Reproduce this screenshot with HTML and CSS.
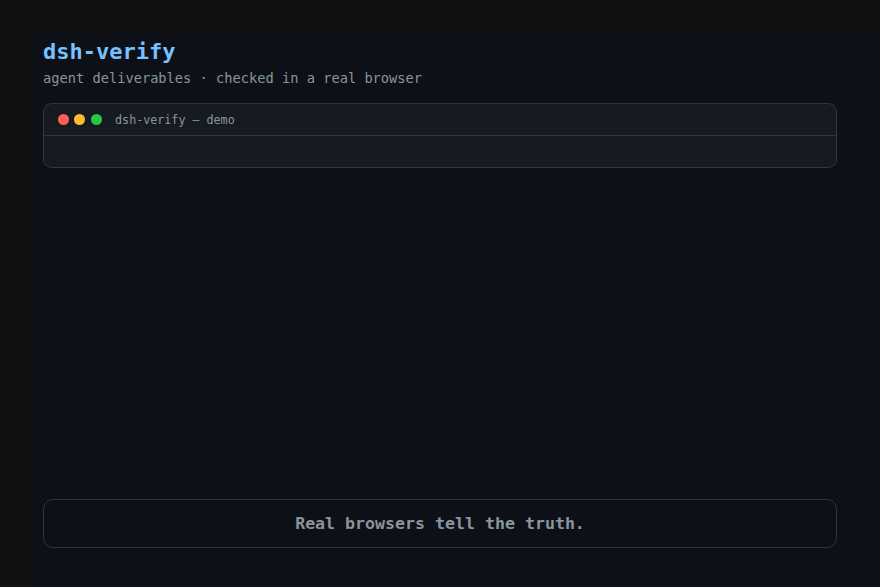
FILE: index.html
```html
<!DOCTYPE html>
<html lang="en">
<head>
<meta charset="utf-8">
<title>dsh-verify</title>
<link rel="stylesheet" href="styles.css">
</head>
<body>
<main class="panel">
  <h1 class="title">dsh-verify</h1>
  <p class="subtitle">agent deliverables · checked in a real browser</p>
  <section class="window">
    <div class="window-bar">
      <span class="dot dot-red"></span>
      <span class="dot dot-yellow"></span>
      <span class="dot dot-green"></span>
      <span class="window-title">dsh-verify — demo</span>
    </div>
    <div class="window-body"></div>
  </section>
  <footer class="footer">Real browsers tell the truth.</footer>
</main>
</body>
</html>
```

FILE: styles.css
```css
html, body {
  margin: 0;
  padding: 0;
  height: 100%;
}

body {
  background: #121012;
  font-family: "DejaVu Sans Mono", "Liberation Mono", monospace;
  overflow: hidden;
}

.panel {
  box-sizing: border-box;
  margin: 32px 0 0 32px;
  min-height: calc(100vh - 32px);
  background: #0d1117;
  padding: 7px 0 39px 11px;
  display: flex;
  flex-direction: column;
}

.title {
  margin: 0;
  font-size: 22px;
  line-height: 26px;
  font-weight: bold;
  color: #79c0ff;
}

.subtitle {
  margin: 4px 0 0;
  font-size: 13.7px;
  line-height: 18px;
  color: #8b949e;
}

.window {
  box-sizing: border-box;
  width: 794px;
  margin-top: 16px;
  background: #161b22;
  border: 1px solid #30363d;
  border-radius: 9px;
}

.window-bar {
  height: 31px;
  border-bottom: 1px solid #30363d;
  display: flex;
  align-items: center;
  padding: 0 13px 0 13.5px;
  gap: 5.7px;
}

.dot {
  width: 11px;
  height: 11px;
  border-radius: 50%;
  flex: none;
}

.dot-red { background: #ff5f57; }
.dot-yellow { background: #febc2e; }
.dot-green { background: #28c840; }

.window-title {
  margin-left: 7.5px;
  font-size: 11.7px;
  color: #8b949e;
}

.window-body {
  height: 31px;
}

.footer {
  box-sizing: border-box;
  width: 794px;
  margin-top: auto;
  height: 49px;
  border: 1px solid #30363d;
  border-radius: 10px;
  display: flex;
  align-items: center;
  justify-content: center;
  font-size: 16.6px;
  font-weight: bold;
  color: #8b949e;
}
```
